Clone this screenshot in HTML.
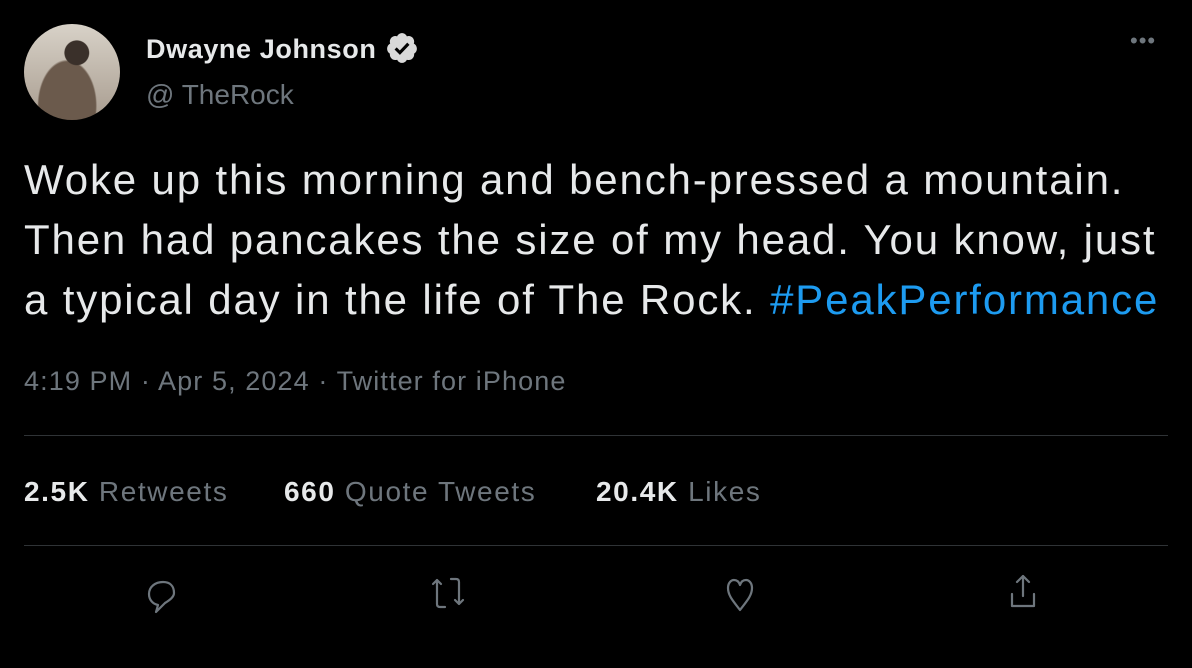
<!DOCTYPE html><html><head><style>
body{margin:0;width:1192px;height:668px;background:#000;font-family:"Liberation Sans",sans-serif;position:relative;overflow:hidden}
.a{position:absolute;white-space:nowrap}
.g{color:#6e767d}
b{color:#e7e9ea}
hr{position:absolute;left:24px;width:1144px;border:0;border-top:1px solid #2f3336;margin:0}
.s{font-size:28px;top:476px;letter-spacing:1.6px}
</style></head><body>
<div class="a" style="left:24px;top:24px;width:96px;height:96px;border-radius:50%;background:radial-gradient(circle at 55% 30%,#3a302a 0 14%,transparent 15%),radial-gradient(ellipse at 45% 85%,#6b5a4c 0 38%,transparent 40%),linear-gradient(#d8d2c8,#a89c8f)"></div>
<div class="a" style="left:146px;top:34px;font-size:27px;font-weight:bold;color:#e7e9ea;letter-spacing:0.6px">Dwayne Johnson</div>
<svg class="a" style="left:385px;top:31px" width="34" height="34" viewBox="0 0 24 24"><path fill="#d9d9d9" d="M22.5 12.5c0-1.58-.875-2.95-2.148-3.6.154-.435.238-.905.238-1.4 0-2.21-1.710-3.998-3.818-3.998-.47 0-.92.084-1.336.25C14.818 2.415 13.51 1.5 12 1.5s-2.816.917-3.437 2.250c-.415-.165-.866-.25-1.336-.25-2.11 0-3.818 1.79-3.818 4 0 .494.083.964.237 1.4-1.272.65-2.147 2.018-2.147 3.6 0 1.495.782 2.798 1.942 3.486-.02.17-.032.34-.032.514 0 2.21 1.708 4 3.818 4 .47 0 .92-.086 1.335-.25.62 1.334 1.926 2.25 3.437 2.25 1.512 0 2.818-.916 3.437-2.25.415.163.865.248 1.336.248 2.11 0 3.818-1.79 3.818-4 0-.174-.012-.344-.033-.513 1.158-.687 1.943-1.990 1.943-3.484z"/><path d="M7.5 12.3l3 3 6-6.3" stroke="#000" stroke-width="2.2" fill="none"/></svg>
<div class="a g" style="left:146px;top:79px;font-size:28px">@ TheRock</div>
<div class="a g" style="left:1130px;top:28px;font-size:22px;letter-spacing:1px">•••</div>
<div class="a" style="left:24px;top:150px;font-size:42px;letter-spacing:1.85px;line-height:60px;color:#e7e9ea">Woke up this morning and bench-pressed a mountain.<br>Then had pancakes the size of my head. You know, just<br>a typical day in the life of The Rock. <span style="color:#1d9bf0">#PeakPerformance</span></div>
<div class="a g" style="left:24px;top:366px;font-size:27px;letter-spacing:1.1px">4:19 PM · Apr 5, 2024 · Twitter for iPhone</div>
<hr style="top:435px"><hr style="top:545px">
<div class="a g s" style="left:24px"><b>2.5K</b> Retweets</div>
<div class="a g s" style="left:284px"><b>660</b> Quote Tweets</div>
<div class="a g s" style="left:596px"><b>20.4K</b> Likes</div>
<svg class="a" style="left:0;top:562px" width="1192" height="60" fill="none" stroke="#6e767d" stroke-width="2.2" stroke-linejoin="round" stroke-linecap="round">
<path d="M163 20 c-8 0-14 5-14 12 0 6 4 10 9 11 l-2 7 9-9 c5-3 9-6 9-10 0-7-4-11-11-11z"/>
<path d="M437 18 l-4 4 m4-4 l4 4 m-4-4 v24 q0 3 3 3 h5 M459 42 l-4-4 m4 4 l4-4 m-4 4 v-22 q0-3-3-3 h-5"/>
<path d="M740 48 c-6-8-12-14-12-22 0-5 3-8 6-8 3 0 5 2 6 5 1-3 3-5 6-5 3 0 6 3 6 8 0 8-6 14-12 22z"/>
<path d="M1023 14 v20 m-6-14 l6-6 6 6 M1012 32 v12 h22 v-12"/>
</svg>
</body></html>
